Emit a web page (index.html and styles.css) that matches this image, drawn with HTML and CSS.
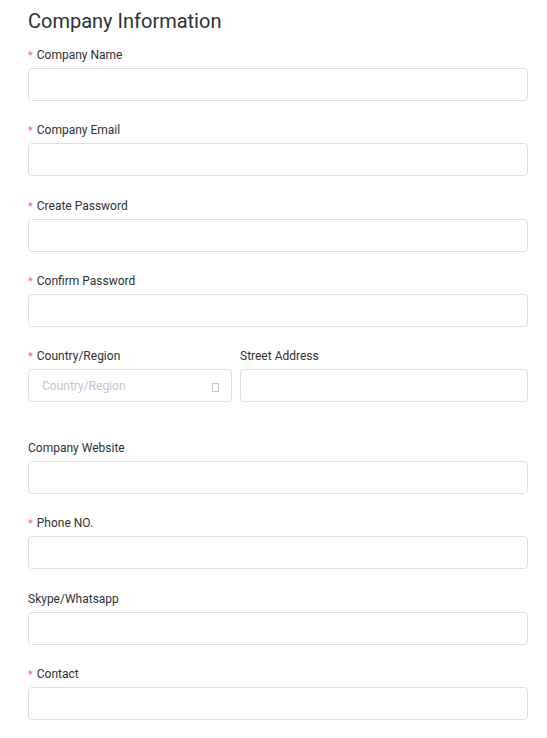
FILE: index.html
```html
<!DOCTYPE html>
<html lang="en">
<head>
<meta charset="utf-8">
<title>Company Information</title>
<link rel="stylesheet" href="styles.css">
</head>
<body>
<form class="form">
  <h2 class="title">Company Information</h2>
  <div class="item"><label class="label req">Company Name</label><div class="input"></div></div>
  <div class="item"><label class="label req">Company Email</label><div class="input"></div></div>
  <div class="item"><label class="label req">Create Password</label><div class="input"></div></div>
  <div class="item"><label class="label req">Confirm Password</label><div class="input"></div></div>
  <div class="row">
    <div class="col"><label class="label req">Country/Region</label>
      <div class="input select"><span class="placeholder">Country/Region</span><span class="tofu"></span></div>
    </div>
    <div class="col"><label class="label">Street Address</label><div class="input"></div></div>
  </div>
  <div class="item"><label class="label">Company Website</label><div class="input"></div></div>
  <div class="item"><label class="label req">Phone NO.</label><div class="input"></div></div>
  <div class="item"><label class="label">Skype/Whatsapp</label><div class="input"></div></div>
  <div class="item"><label class="label req">Contact</label><div class="input"></div></div>
</form>
</body>
</html>
```
FILE: styles.css
```css
html, body { margin: 0; padding: 0; background: #fff; }
body { font-family: Roboto, "Noto Sans", sans-serif; color: #303133; }
.form { padding: 8px 19px 0 28px; display: flex; flex-direction: column; }
.title { margin: 0 0 10px; font-size: 20px; line-height: 26px; font-weight: 400; color: #303133; }
.item { display: flex; flex-direction: column; margin-bottom: 18.25px; }
.label { display: block; box-sizing: border-box; font-size: 12px; line-height: 20px; height: 21px; padding-top: 1px; margin-bottom: 3px; color: #303133; }
.label.req::before { content: "*"; color: #f56c6c; margin-right: 4px; font-size: 11px; }
.input { height: 33px; box-sizing: border-box; border: 1px solid #dcdfe6; border-radius: 4px; background: #fff; }
.row { display: grid; grid-template-columns: 204px 1fr; gap: 8px; margin-bottom: 35px; }
.col { display: flex; flex-direction: column; }
.select { display: flex; align-items: center; justify-content: space-between; padding: 0 12px 0 13px; }
.placeholder { font-size: 12px; color: #c0c4cc; }
.tofu { width: 5px; height: 7px; border: 1px solid #c0c4cc; margin-top: 3px; }
```
